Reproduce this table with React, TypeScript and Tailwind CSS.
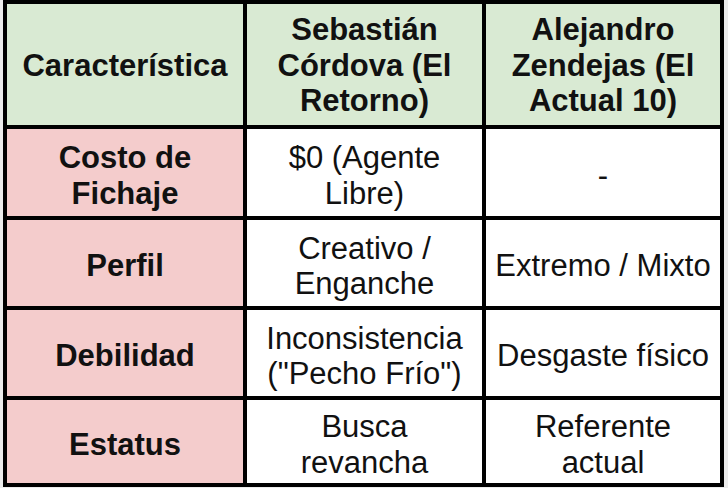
import React from 'react'

type Cell = {
  lines: string[]
  tone: 'head' | 'label' | 'plain'
}

const rows: Cell[][] = [
  [
    { lines: ['Característica'], tone: 'head' },
    { lines: ['Sebastián', 'Córdova (El', 'Retorno)'], tone: 'head' },
    { lines: ['Alejandro', 'Zendejas (El', 'Actual 10)'], tone: 'head' },
  ],
  [
    { lines: ['Costo de', 'Fichaje'], tone: 'label' },
    { lines: ['$0 (Agente', 'Libre)'], tone: 'plain' },
    { lines: ['-'], tone: 'plain' },
  ],
  [
    { lines: ['Perfil'], tone: 'label' },
    { lines: ['Creativo /', 'Enganche'], tone: 'plain' },
    { lines: ['Extremo / Mixto'], tone: 'plain' },
  ],
  [
    { lines: ['Debilidad'], tone: 'label' },
    { lines: ['Inconsistencia', '("Pecho Frío")'], tone: 'plain' },
    { lines: ['Desgaste físico'], tone: 'plain' },
  ],
  [
    { lines: ['Estatus'], tone: 'label' },
    { lines: ['Busca', 'revancha'], tone: 'plain' },
    { lines: ['Referente', 'actual'], tone: 'plain' },
  ],
]

const toneClass = {
  head: 'bg-[#d9ead3] font-bold pt-[2px]',
  label: 'bg-[#f4cccc] font-bold pt-[6px]',
  plain: 'bg-white font-normal pt-[6px]',
}

function TableCell({ cell }: { cell: Cell }) {
  return (
    <div
      className={`flex flex-col items-center justify-center text-center text-[31px] leading-[35.5px] text-[#111] ${toneClass[cell.tone]}`}
    >
      {cell.lines.map((line, i) => (
        <span key={i} className="whitespace-nowrap">
          {line}
        </span>
      ))}
    </div>
  )
}

export default function App() {
  return (
    <div
      className="w-[728px] h-[488px] bg-[#ececec] overflow-hidden"
      style={{ fontFamily: '"Liberation Sans", Arial, sans-serif' }}
    >
      <div className="ml-[3px] w-[721px] grid grid-cols-[236px_235px_234px] grid-rows-[121px_87px_86px_86px_83px] gap-[4px] p-[4px] bg-black">
        {rows.flatMap((row, r) =>
          row.map((cell, c) => <TableCell key={`${r}-${c}`} cell={cell} />)
        )}
      </div>
    </div>
  )
}
